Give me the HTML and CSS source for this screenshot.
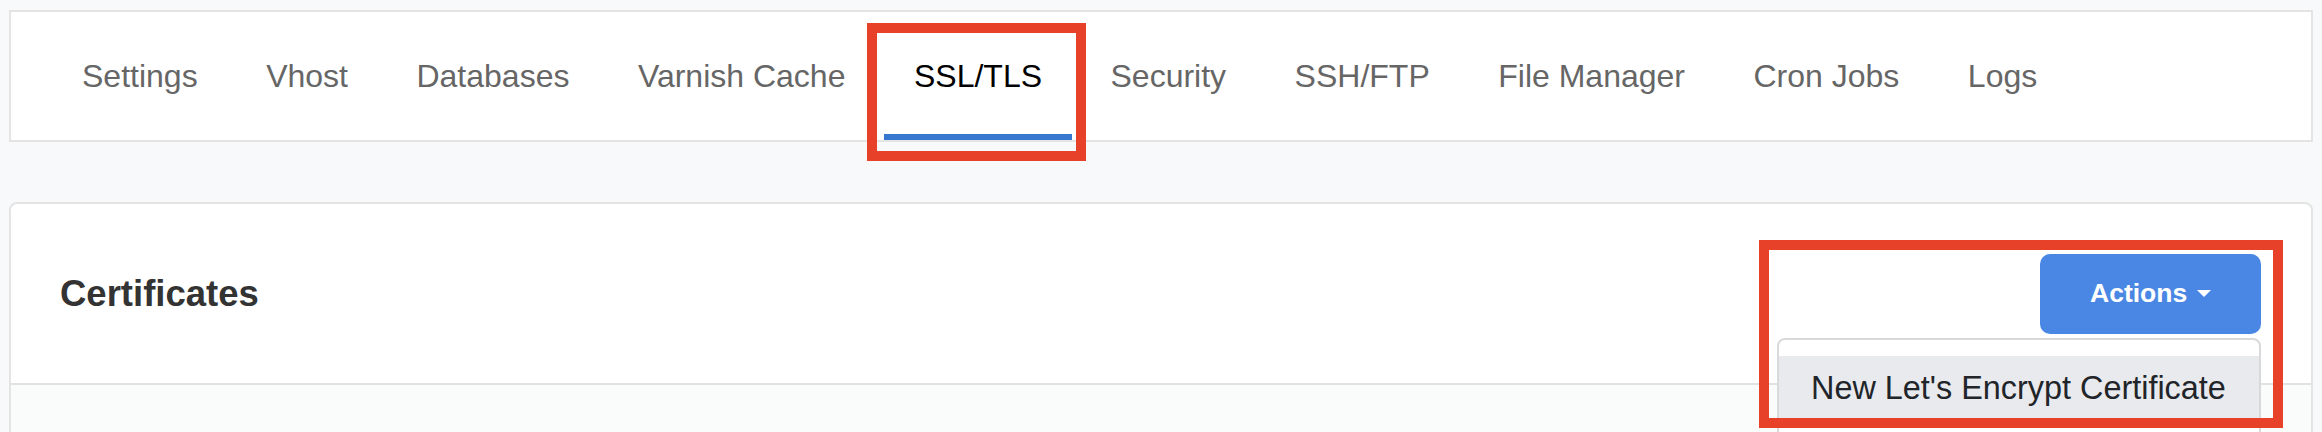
FILE: index.html
```html
<!DOCTYPE html>
<html lang="en">
<head>
<meta charset="utf-8">
<title>SSL/TLS</title>
<link rel="stylesheet" href="styles.css">
</head>
<body>
<div class="page">
  <nav class="tabs">
    <a class="tab">Settings</a>
    <a class="tab">Vhost</a>
    <a class="tab">Databases</a>
    <a class="tab">Varnish Cache</a>
    <a class="tab active">SSL/TLS</a>
    <a class="tab">Security</a>
    <a class="tab">SSH/FTP</a>
    <a class="tab">File Manager</a>
    <a class="tab">Cron Jobs</a>
    <a class="tab">Logs</a>
  </nav>
  <section class="card">
    <header class="card-header">
      <h2 class="card-title">Certificates</h2>
      <div class="dropdown">
        <button class="btn">Actions<span class="caret"></span></button>
        <div class="menu">
          <a class="menu-item">New Let's Encrypt Certificate</a>
        </div>
      </div>
    </header>
    <div class="card-body"></div>
  </section>
</div>
</body>
</html>
```

FILE: styles.css
```css
html, body {
  margin: 0;
  height: 432px;
  overflow: hidden;
  background: #f8f9fa;
  font-family: "Liberation Sans", Arial, Helvetica, sans-serif;
}

.page {
  padding: 10px 9px 0 9px;
}

.tabs {
  display: flex;
  gap: 8.5px;
  padding-left: 41px;
  background: #fff;
  border: 2px solid #e4e4e4;
}

.tab {
  position: relative;
  box-sizing: border-box;
  height: 128px;
  padding: 46px 30px 0;
  font-size: 32px;
  line-height: 37px;
  color: #666;
  border-bottom: 6px solid transparent;
  white-space: nowrap;
}

.tab.active {
  color: #000;
  border-bottom-color: #3677cf;
}

.tab.active::after {
  content: "";
  position: absolute;
  left: -17px;
  right: -14px;
  top: 11px;
  bottom: -27px;
  border: 10px solid #e8412a;
}

.card {
  margin-top: 60px;
  background: #fff;
  border: 2px solid #e4e4e4;
  border-radius: 8px;
}

.card-header {
  box-sizing: border-box;
  height: 181px;
  padding: 0 50px 0 49px;
  display: flex;
  align-items: center;
  justify-content: space-between;
  border-bottom: 2px solid #e2e2e2;
}

.card-title {
  margin: 0;
  font-size: 36.5px;
  font-weight: 700;
  color: #333;
}

.dropdown {
  position: relative;
}

.dropdown::after {
  content: "";
  position: absolute;
  left: -281px;
  right: -22px;
  top: -14px;
  bottom: -94px;
  border: 10px solid #e8412a;
}

.btn {
  box-sizing: border-box;
  width: 221px;
  height: 80px;
  padding: 0 50px;
  display: flex;
  align-items: center;
  gap: 10px;
  border: 0;
  border-radius: 10px;
  background: #4a87e4;
  color: #fff;
  font-family: inherit;
  font-size: 26.5px;
  font-weight: 700;
}

.caret {
  width: 0;
  height: 0;
  border-left: 7px solid transparent;
  border-right: 7px solid transparent;
  border-top: 7px solid #fff;
}

.menu {
  position: absolute;
  top: calc(100% + 4px);
  right: 0;
  box-sizing: border-box;
  width: 484px;
  padding: 16px 0;
  background: #fff;
  border: 2px solid #d9d9d9;
  border-radius: 8px;
}

.menu-item {
  display: block;
  padding: 8px 32px;
  font-size: 32.4px;
  line-height: 48px;
  color: #212529;
  background: #e9eaee;
  white-space: nowrap;
}

.card-body {
  height: 200px;
  background: #fafbfb;
  border-radius: 0 0 8px 8px;
}
```
